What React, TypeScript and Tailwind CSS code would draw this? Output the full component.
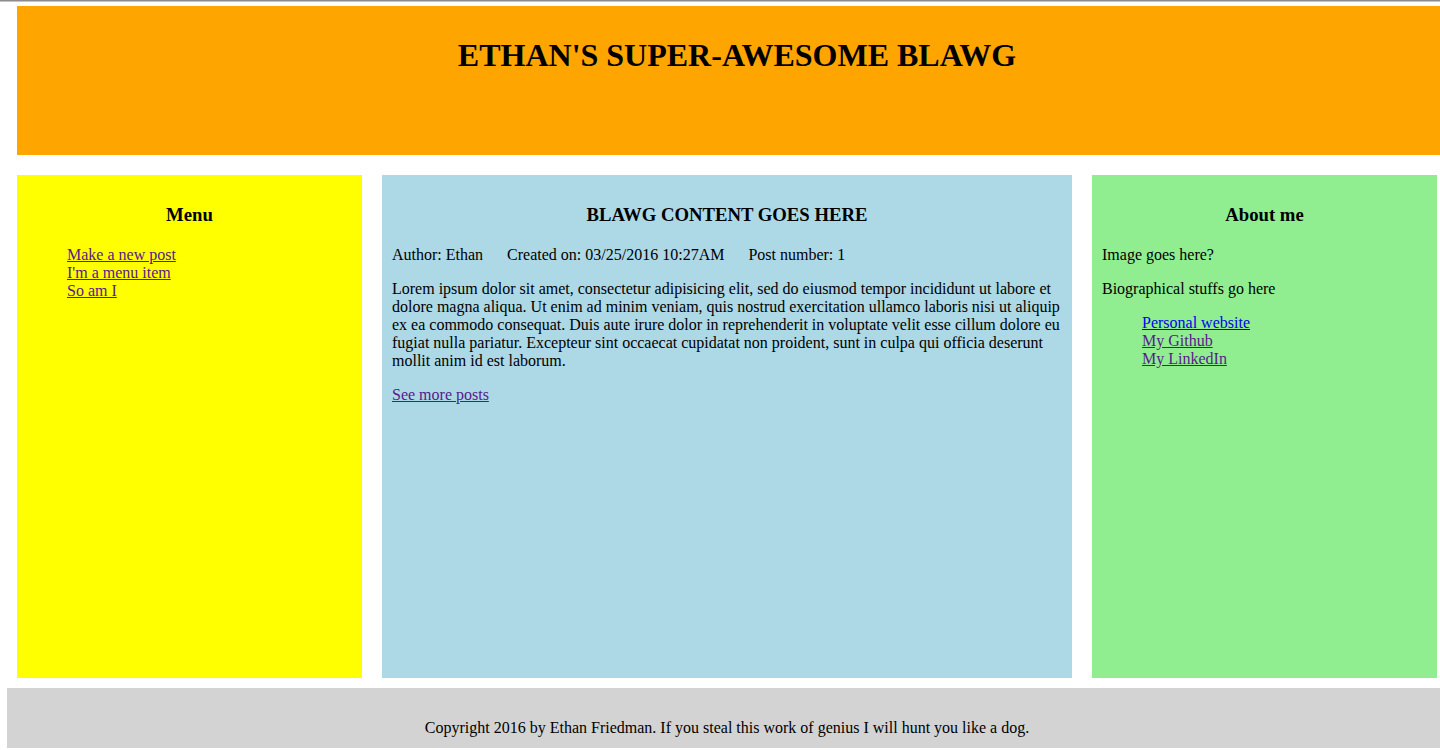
const App = () => {
    return (
        <div className="w-[1440px] h-[750px] overflow-hidden bg-white text-black text-[16px] leading-[18px]" style={{ fontFamily: '"Liberation Serif", "Times New Roman", serif' }}>
            <div className="h-[1px] bg-[#8c8c8c]"></div>
            <div className="h-[1px] bg-[#c4c4c4]"></div>
            {/* header */}
            <div className="ml-[17px] mt-[4px] w-[1440px] h-[149px] bg-[#ffa500] p-[10px] text-center">
                <h1 className="text-[32px] font-bold leading-[37px] my-[21px]">ETHAN'S SUPER-AWESOME BLAWG</h1>
            </div>

            <div className="flex gap-[20px] ml-[17px] mt-[20px] h-[503px]">
                {/* menu */}
                <div className="w-[345px] bg-[#ffff00] p-[10px]">
                    <h3 className="text-[18.72px] font-bold text-center leading-[22px] mt-[19px] mb-[20px]">Menu</h3>
                    <ul className="list-none pl-[40px] my-[16px]">
                        <li><a href="#" className="underline text-[#551a8b]">Make a new post</a></li>
                        <li><a href="#" className="underline text-[#551a8b]">I'm a menu item</a></li>
                        <li><a href="#" className="underline text-[#551a8b]">So am I</a></li>
                    </ul>
                </div>

                {/* content */}
                <div className="w-[690px] bg-[#add8e6] p-[10px]">
                    <h3 className="text-[18.72px] font-bold text-center leading-[22px] mt-[19px] mb-[20px]">BLAWG CONTENT GOES HERE</h3>
                    <p className="my-[16px]">
                        <span className="mr-[24px]">Author: Ethan</span>
                        <span className="mr-[24px]">Created on: 03/25/2016 10:27AM</span>
                        <span>Post number: 1</span>
                    </p>
                    <p className="my-[16px]">
                        Lorem ipsum dolor sit amet, consectetur adipisicing elit, sed do eiusmod tempor incididunt ut labore et dolore magna aliqua. Ut enim ad minim veniam, quis nostrud exercitation ullamco laboris nisi ut aliquip ex ea commodo consequat. Duis aute irure dolor in reprehenderit in voluptate velit esse cillum dolore eu fugiat nulla pariatur. Excepteur sint occaecat cupidatat non proident, sunt in culpa qui officia deserunt mollit anim id est laborum.
                    </p>
                    <p className="my-[16px]"><a href="#" className="underline text-[#551a8b]">See more posts</a></p>
                </div>

                {/* about */}
                <div className="w-[345px] bg-[#90ee90] p-[10px]">
                    <h3 className="text-[18.72px] font-bold text-center leading-[22px] mt-[19px] mb-[20px]">About me</h3>
                    <p className="my-[16px]">Image goes here?</p>
                    <p className="my-[16px]">Biographical stuffs go here</p>
                    <ul className="list-none pl-[40px] my-[16px]">
                        <li><a href="#" className="underline text-[#0000ee]">Personal website</a></li>
                        <li><a href="#" className="underline text-[#551a8b]">My Github</a></li>
                        <li><a href="#" className="underline text-[#551a8b]">My LinkedIn</a></li>
                    </ul>
                </div>
            </div>

            {/* footer */}
            <div className="ml-[7px] mt-[10px] w-[1440px] h-[60px] bg-[#d3d3d3] pt-[15px] text-center">
                <p className="my-[16px]">Copyright 2016 by Ethan Friedman. If you steal this work of genius I will hunt you like a dog.</p>
            </div>
        </div>
    );
};

export default App;
